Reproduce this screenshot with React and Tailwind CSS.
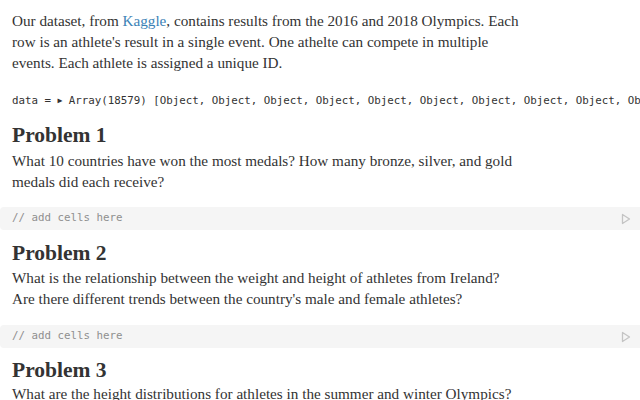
import React from "react";

const serif = "font-['Liberation_Serif',serif]";
const mono = "font-['DejaVu_Sans_Mono',monospace]";

function Heading({ children, className = "" }) {
  return (
    <h2 className={`${serif} text-[21.5px] leading-[28px] font-bold text-[#333] ${className}`}>
      {children}
    </h2>
  );
}

function Prose({ children, className = "" }) {
  return (
    <p className={`${serif} text-[15.2px] leading-[21px] text-[#333] whitespace-nowrap ${className}`}>{children}</p>
  );
}

function EmptyCell({ className = "" }) {
  return (
    <div className={`flex items-center justify-between h-[23px] rounded-l bg-[#f5f5f5] pl-3 pr-[9px] ${className}`}>
      <span className={`${mono} text-[10.8px] text-[#8f8f8f]`}>// add cells here</span>
      <svg width="10" height="12" viewBox="0 0 10 12" fill="none">
        <path d="M1.5 1.5 L8.5 6 L1.5 10.5 Z" stroke="#c4c4c4" strokeWidth="1.3" strokeLinejoin="round" />
      </svg>
    </div>
  );
}

export default function App() {
  return (
    <div className="w-[640px] h-[400px] overflow-hidden bg-white">
      <div className="pl-3 pt-[10px]">
        <Prose>
          Our dataset, from <a className="text-[#3b82b6]">Kaggle</a>, contains results from the 2016 and 2018 Olympics. Each
          <br />
          row is an athlete's result in a single event. One athelte can compete in multiple
          <br />
          events. Each athlete is assigned a unique ID.
        </Prose>
        <div className={`${mono} mt-[18px] text-[10.8px] leading-[20px] text-[#333] whitespace-nowrap`}>
          data = <span className="text-[8px] relative -top-px">▶</span> Array(18579) [Object, Object, Object, Object, Object, Object, Object, Object, Object, Object, Object]
        </div>
        <Heading className="mt-[9px]">Problem 1</Heading>
        <Prose className="mt-[1px]">
          What 10 countries have won the most medals? How many bronze, silver, and gold
          <br />
          medals did each receive?
        </Prose>
      </div>
      <EmptyCell className="mt-[15px]" />
      <div className="pl-3">
        <Heading className="mt-[9px]">Problem 2</Heading>
        <Prose className="mt-[0px]">
          What is the relationship between the weight and height of athletes from Ireland?
          <br />
          Are there different trends between the country's male and female athletes?
        </Prose>
      </div>
      <EmptyCell className="mt-[16px]" />
      <div className="pl-3">
        <Heading className="mt-[8px]">Problem 3</Heading>
        <Prose className="mt-[-1px]">
          What are the height distributions for athletes in the summer and winter Olympics?
        </Prose>
      </div>
    </div>
  );
}
